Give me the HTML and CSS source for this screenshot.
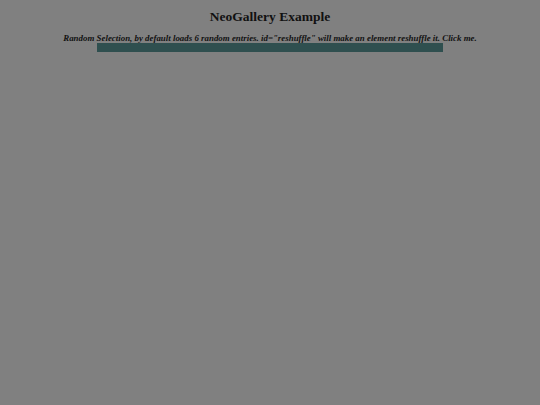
FILE: index.html
```html
<!DOCTYPE html>
<html>
<head>
<meta charset="utf-8">
<link rel="stylesheet" href="styles.css">
</head>
<body>
<h1 class="title">NeoGallery Example</h1>
<p class="subtitle">Random Selection, by default loads 6 random entries. id="reshuffle" will make an element reshuffle it. Click me.</p>
<div class="bar"></div>
</body>
</html>
```
FILE: styles.css
```css
html, body {
  margin: 0;
  padding: 0;
  background: #808080;
  font-family: "Liberation Serif", "Times New Roman", serif;
  color: #111;
}
body {
  display: flex;
  flex-direction: column;
  align-items: center;
}
.title {
  margin: 9px 0 0 0;
  font-size: 13.5px;
  font-weight: bold;
  line-height: 16px;
}
.subtitle {
  margin: 9px 0 0 0;
  font-size: 8.9px;
  font-weight: bold;
  font-style: italic;
  line-height: 9px;
}
.bar {
  width: 346px;
  height: 9px;
  background: #2f4f4f;
}
```
